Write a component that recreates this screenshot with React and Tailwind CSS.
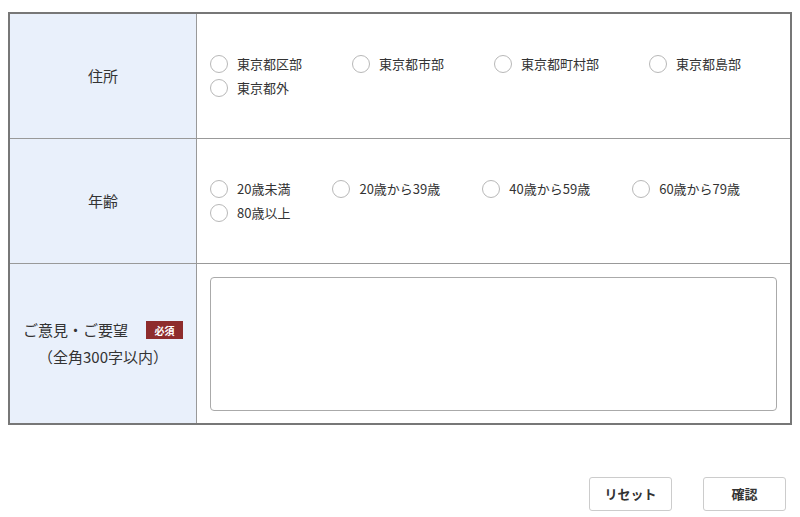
import React, { useState } from 'react';

const addressOptions = ['東京都区部', '東京都市部', '東京都町村部', '東京都島部', '東京都外'];
const ageOptions = ['20歳未満', '20歳から39歳', '40歳から59歳', '60歳から79歳', '80歳以上'];

const RadioGroup = ({ name, options, value, onChange, gapClass }) => (
    <div className={`flex flex-wrap ${gapClass}`}>
        {options.map((opt) => (
            <label key={opt} className="flex items-center h-6 gap-[9px] cursor-pointer">
                <input
                    type="radio"
                    name={name}
                    value={opt}
                    checked={value === opt}
                    onChange={() => onChange(opt)}
                    className="appearance-none w-[18px] h-[18px] rounded-full border border-[#b8b8b8] bg-white checked:border-[5px] checked:border-[#555] m-0"
                />
                <span className="text-[13px] text-[#333] whitespace-nowrap">{opt}</span>
            </label>
        ))}
    </div>
);

const App = () => {
    const [address, setAddress] = useState('');
    const [age, setAge] = useState('');
    const [comment, setComment] = useState('');

    return (
        <div className="w-[800px] h-[517px] bg-white pt-3 font-['Noto_Sans_CJK_JP','Noto_Sans',sans-serif] text-[#333]">
            {/* Form table */}
            <div className="ml-2 w-[784px] border-2 border-[#777]">
                <div className="flex border-b border-[#999]">
                    <div className="w-[187px] h-[124px] shrink-0 bg-[#e9f0fb] border-r border-[#999] flex items-center justify-center text-[15px]">
                        住所
                    </div>
                    <div className="flex-1 flex items-center pl-[13px] pr-[13px]">
                        <RadioGroup name="address" options={addressOptions} value={address} onChange={setAddress} gapClass="gap-x-[50px]" />
                    </div>
                </div>
                <div className="flex border-b border-[#999]">
                    <div className="w-[187px] h-[124px] shrink-0 bg-[#e9f0fb] border-r border-[#999] flex items-center justify-center text-[15px]">
                        年齢
                    </div>
                    <div className="flex-1 flex items-center pl-[13px] pr-[13px]">
                        <RadioGroup name="age" options={ageOptions} value={age} onChange={setAge} gapClass="gap-x-[42px]" />
                    </div>
                </div>
                <div className="flex">
                    <div className="w-[187px] h-[159px] shrink-0 bg-[#e9f0fb] border-r border-[#999] flex flex-col items-center justify-center gap-[4px] text-[15px]">
                        <div className="flex items-center gap-[18px]">
                            <span>ご意見・ご要望</span>
                            <span className="w-[37px] h-[18px] bg-[#8e2c2c] text-white text-[10px] font-bold flex items-center justify-center">必須</span>
                        </div>
                        <div>（全角300字以内）</div>
                    </div>
                    <div className="flex-1 pl-[13px] pr-[13px] pt-[13px]">
                        <textarea
                            value={comment}
                            onChange={(e) => setComment(e.target.value)}
                            className="block w-full h-[134px] border border-[#aaa] rounded-[4px] resize-none outline-none p-2 text-[13px]"
                        />
                    </div>
                </div>
            </div>

            {/* Buttons */}
            <div className="ml-2 w-[778px] mt-[52px] flex justify-end gap-[31px]">
                <button
                    type="button"
                    onClick={() => { setAddress(''); setAge(''); setComment(''); }}
                    className="w-[83px] h-[34px] border border-[#ccc] rounded-[3px] bg-white text-[13px] font-bold text-[#333]"
                >
                    リセット
                </button>
                <button type="button" className="w-[83px] h-[34px] border border-[#ccc] rounded-[3px] bg-white text-[13px] font-bold text-[#333]">
                    確認
                </button>
            </div>
        </div>
    );
};

export default App;
